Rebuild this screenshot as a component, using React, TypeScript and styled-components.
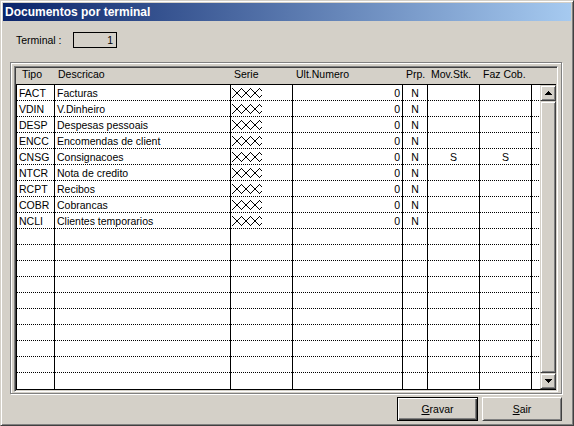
import React from 'react';
import styled, { createGlobalStyle } from 'styled-components';

// Documentos por terminal – Win2k style dialog

const GlobalStyle = createGlobalStyle`
  html, body {
    margin: 0;
    padding: 0;
    background: #d4d0c8;
  }
  body {
    font-family: "Liberation Sans", Arial, sans-serif;
    font-size: 10.5px;
    color: #000;
  }
  * {
    box-sizing: border-box;
  }
`;

const Window = styled.div`
  width: 574px;
  height: 426px;
  display: flex;
  flex-direction: column;
  background: #d4d0c8;
  border: 1px solid;
  border-color: #d4d0c8 #404040 #404040 #d4d0c8;
  box-shadow: inset 1px 1px #fff, inset -1px -1px #808080;
  padding: 2px;
`;

const TitleBar = styled.div`
  flex: none;
  height: 18px;
  display: flex;
  align-items: center;
  padding-left: 2px;
  background: linear-gradient(to right, #0a246a, #a6caf0);
  color: #fff;
  font-weight: bold;
  font-size: 12px;
`;

const TerminalRow = styled.div`
  display: flex;
  align-items: center;
  height: 16px;
  margin: 11px 0 0 13px;
`;

const FieldLabel = styled.span`
  width: 57px;
`;

const FieldBox = styled.div`
  width: 44px;
  height: 16px;
  border: 1px solid #000;
  text-align: right;
  padding-right: 3px;
  line-height: 14px;
`;

const GridFrame = styled.div`
  width: 552px;
  height: 332px;
  margin: 14px 0 0 7px;
  border: 1px solid #808080;
  box-shadow: inset 1px 1px #fff, 1px 1px #fff;
  padding: 3px 3px 1px 3px;
`;

const GridInner = styled.div`
  height: 100%;
  display: flex;
  flex-direction: column;
  border: 1px solid;
  border-color: #808080 #fff #fff #808080;
  box-shadow: inset 1px 1px #404040, inset -1px -1px #d4d0c8;
  padding: 1px;
`;

const HeaderRow = styled.div`
  flex: none;
  display: flex;
  height: 16px;
  padding-left: 1px;
`;

const HeaderCell = styled.div<{ $w: number; $pad?: number }>`
  width: ${(p) => p.$w}px;
  padding-left: ${(p) => p.$pad ?? 3}px;
  line-height: 11px;
  padding-top: 1px;
  white-space: nowrap;
`;

const DataArea = styled.div`
  flex: none;
  height: 306px;
  display: flex;
  background: #fff;
  border: 1px solid #000;
  border-right: none;
`;

const Column = styled.div<{ $w: number; $open?: boolean }>`
  width: ${(p) => p.$w}px;
  flex: none;
  display: flex;
  flex-direction: column;
  border-right: ${(p) => (p.$open ? 'none' : '1px solid #000')};
`;

const Cell = styled.div<{ $align?: 'left' | 'right' | 'center'; $pad?: number }>`
  height: 16px;
  flex: none;
  line-height: 15px;
  padding-top: 1px;
  white-space: nowrap;
  overflow: hidden;
  text-align: ${(p) => p.$align ?? 'left'};
  padding-left: ${(p) => (p.$align === 'right' || p.$align === 'center' ? 0 : p.$pad ?? 2)}px;
  padding-right: ${(p) => (p.$align === 'right' ? 2 : 0)}px;
  background-image: linear-gradient(to right, #000 1px, transparent 1px);
  background-size: 2px 1px;
  background-position: left bottom;
  background-repeat: repeat-x;

  &:last-child {
    background-image: none;
  }
`;

const MaskCell = styled(Cell)`
  padding: 3px 0 0 1px;
  svg {
    display: block;
  }
`;

const ScrollBar = styled.div`
  width: 16px;
  flex: none;
  display: flex;
  flex-direction: column;
  background: #d4d0c8;
`;

const raised = `
  border: 1px solid;
  border-color: #d4d0c8 #404040 #404040 #d4d0c8;
  box-shadow: inset 1px 1px #fff, inset -1px -1px #808080;
  background: #d4d0c8;
`;

const ScrollButton = styled.div`
  flex: none;
  height: 16px;
  display: flex;
  align-items: center;
  justify-content: center;
  ${raised}
`;

const Thumb = styled.div`
  flex: 1;
  ${raised}
`;

const ButtonRow = styled.div`
  display: flex;
  justify-content: flex-end;
  gap: 4px;
  margin-top: 3px;
  padding-right: 9px;
`;

const Button = styled.button<{ $w: number; $default?: boolean }>`
  width: ${(p) => p.$w}px;
  height: 24px;
  padding: 0;
  margin: 0;
  font-family: "Liberation Sans", Arial, sans-serif;
  font-size: 10.5px;
  color: #000;
  background: #d4d0c8;
  border: 1px solid;
  border-color: ${(p) => (p.$default ? '#000' : '#fff #404040 #404040 #fff')};
  box-shadow: ${(p) =>
    p.$default
      ? 'inset 1px 1px #fff, inset -1px -1px #404040, inset -2px -2px #808080'
      : 'inset 1px 1px #d4d0c8, inset -1px -1px #808080'};
  u {
    text-decoration: underline;
  }
`;

const Arrow: React.FC<{ down?: boolean }> = ({ down }) => {
  const rows = [1, 3, 5, 7];
  const ordered = down ? [...rows].reverse() : rows;
  return (
    <svg width="7" height="4" viewBox="0 0 7 4" shapeRendering="crispEdges">
      {ordered.map((w, i) => (
        <rect key={i} x={(7 - w) / 2} y={i} width={w} height={1} fill="#000" />
      ))}
    </svg>
  );
};

// "xxx" edit mask: two crossing pixel zigzags
const MASK_W = 30;
const MASK_H = 10;
const maskDots: [number, number][] = (() => {
  const half = MASK_H - 1;
  const period = half * 2;
  const pts: [number, number][] = [];
  for (let x = 0; x < MASK_W; x++) {
    const m = x % period;
    const a = m <= half ? m : period - m;
    pts.push([x, a]);
    if (half - a !== a) pts.push([x, half - a]);
  }
  return pts;
})();

const SerieMask: React.FC = () => (
  <svg width={MASK_W} height={MASK_H} viewBox={`0 0 ${MASK_W} ${MASK_H}`} shapeRendering="crispEdges">
    {maskDots.map(([x, y], i) => (
      <rect key={i} x={x} y={y} width={1} height={1} fill="#000" />
    ))}
  </svg>
);

interface Documento {
  tipo: string;
  descricao: string;
  movStk?: string;
  fazCob?: string;
}

const documentos: Documento[] = [
  { tipo: 'FACT', descricao: 'Facturas' },
  { tipo: 'VDIN', descricao: 'V.Dinheiro' },
  { tipo: 'DESP', descricao: 'Despesas pessoais' },
  { tipo: 'ENCC', descricao: 'Encomendas de client' },
  { tipo: 'CNSG', descricao: 'Consignacoes', movStk: 'S', fazCob: 'S' },
  { tipo: 'NTCR', descricao: 'Nota de credito' },
  { tipo: 'RCPT', descricao: 'Recibos' },
  { tipo: 'COBR', descricao: 'Cobrancas' },
  { tipo: 'NCLI', descricao: 'Clientes temporarios' },
];

const TOTAL_ROWS = 19;
const rows: (Documento | null)[] = Array.from({ length: TOTAL_ROWS }, (_, i) => documentos[i] ?? null);

const columns = [
  { key: 'tipo', title: 'Tipo', w: 38, pad: 5 },
  { key: 'descricao', title: 'Descricao', w: 176 },
  { key: 'serie', title: 'Serie', w: 62 },
  { key: 'ult', title: 'Ult.Numero', w: 110 },
  { key: 'prp', title: 'Prp.', w: 25 },
  { key: 'movStk', title: 'Mov.Stk.', w: 52 },
  { key: 'fazCob', title: 'Faz Cob.', w: 52 },
];

export default function App() {
  return (
    <>
      <GlobalStyle />
      <Window>
        <TitleBar>Documentos por terminal</TitleBar>

        <TerminalRow>
          <FieldLabel>Terminal :</FieldLabel>
          <FieldBox>1</FieldBox>
        </TerminalRow>

        <GridFrame>
          <GridInner>
            <HeaderRow>
              {columns.map((c) => (
                <HeaderCell key={c.key} $w={c.w} $pad={c.pad}>
                  {c.title}
                </HeaderCell>
              ))}
            </HeaderRow>

            <DataArea>
              <Column $w={38}>
                {rows.map((r, i) => (
                  <Cell key={i} $pad={2}>
                    {r?.tipo}
                  </Cell>
                ))}
              </Column>
              <Column $w={176}>
                {rows.map((r, i) => (
                  <Cell key={i}>{r?.descricao}</Cell>
                ))}
              </Column>
              <Column $w={62}>
                {rows.map((r, i) =>
                  r ? (
                    <MaskCell key={i}>
                      <SerieMask />
                    </MaskCell>
                  ) : (
                    <Cell key={i} />
                  )
                )}
              </Column>
              <Column $w={110}>
                {rows.map((r, i) => (
                  <Cell key={i} $align="right">
                    {r ? '0' : ''}
                  </Cell>
                ))}
              </Column>
              <Column $w={25}>
                {rows.map((r, i) => (
                  <Cell key={i} $align="center">
                    {r ? 'N' : ''}
                  </Cell>
                ))}
              </Column>
              <Column $w={52}>
                {rows.map((r, i) => (
                  <Cell key={i} $align="center">
                    {r?.movStk}
                  </Cell>
                ))}
              </Column>
              <Column $w={52}>
                {rows.map((r, i) => (
                  <Cell key={i} $align="center">
                    {r?.fazCob}
                  </Cell>
                ))}
              </Column>
              <Column $w={8} $open>
                {rows.map((_, i) => (
                  <Cell key={i} />
                ))}
              </Column>
              <ScrollBar>
                <ScrollButton>
                  <Arrow />
                </ScrollButton>
                <Thumb />
                <ScrollButton>
                  <Arrow down />
                </ScrollButton>
              </ScrollBar>
            </DataArea>
          </GridInner>
        </GridFrame>

        <ButtonRow>
          <Button $w={81} $default>
            <u>G</u>ravar
          </Button>
          <Button $w={80}>
            <u>S</u>air
          </Button>
        </ButtonRow>
      </Window>
    </>
  );
}
